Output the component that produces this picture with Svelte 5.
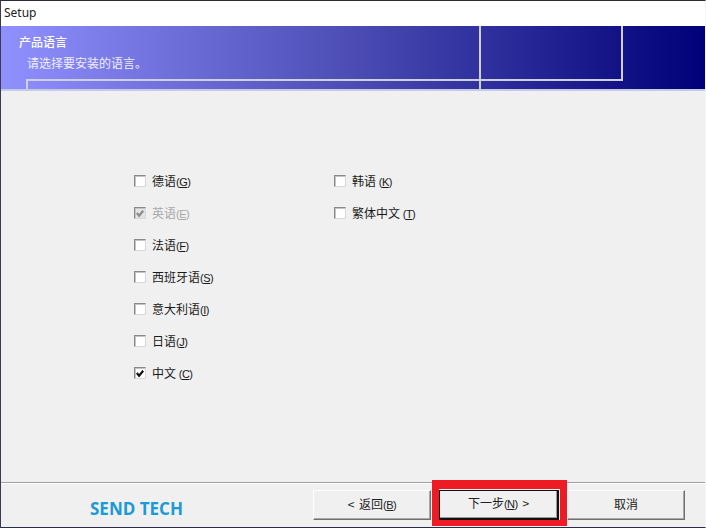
<script>
	const leftCol = [
		{ label: '德语', key: 'G' },
		{ label: '英语', key: 'E', checked: true, disabled: true },
		{ label: '法语', key: 'F' },
		{ label: '西班牙语', key: 'S' },
		{ label: '意大利语', key: 'I' },
		{ label: '日语', key: 'J' },
		{ label: '中文 ', key: 'C', checked: true }
	];
	const rightCol = [
		{ label: '韩语 ', key: 'K' },
		{ label: '繁体中文 ', key: 'T' }
	];
</script>

{#snippet option(item)}
	<div class="option" class:disabled={item.disabled}>
		<span class="box">
			{#if item.checked}
				<svg width="11" height="11" viewBox="0 0 11 11">
					<path d="M2 5 L4.5 8 L9 2.5" fill="none" stroke="currentColor" stroke-width="2.4" />
				</svg>
			{/if}
		</span>
		<span class="label">{item.label}<small>(<u>{item.key}</u>)</small></span>
	</div>
{/snippet}

<div class="window">
	<div class="titlebar">Setup</div>
	<div class="banner">
		<div class="heading">产品语言</div>
		<div class="sub">请选择要安装的语言。</div>
		<i class="deco frame"></i>
		<i class="deco center-line"></i>
		<i class="deco right-line"></i>
	</div>
	<div class="content">
		<div class="col left">
			{#each leftCol as item}
				{@render option(item)}
			{/each}
		</div>
		<div class="col">
			{#each rightCol as item}
				{@render option(item)}
			{/each}
		</div>
	</div>
	<div class="footer">
		<div class="brand">SEND TECH</div>
		<div class="buttons">
			<button class="back">&lt; 返回<small>(<u>B</u>)</small></button>
			<div class="next-wrap">
				<button class="default">下一步<small>(<u>N</u>)</small> &gt;</button>
				<i class="highlight"></i>
			</div>
			<button>取消</button>
		</div>
	</div>
</div>

<style>
	:global(body) {
		margin: 0;
		background: #f0f0f0;
	}

	.window {
		width: 706px;
		height: 528px;
		box-sizing: border-box;
		display: flex;
		flex-direction: column;
		border-top: 1px solid #2b2b3a;
		border-left: 1px solid #3a3a4a;
		border-right: 1px solid #f6f6fa;
		border-bottom: 1px solid #2b2b4a;
		background: #f0f0f0;
		font-family: 'Noto Sans CJK SC', 'Liberation Sans', sans-serif;
		font-size: 12px;
		color: #1a1a1a;
		overflow: hidden;
	}

	.titlebar {
		height: 25px;
		flex: none;
		box-sizing: border-box;
		padding: 4px 0 0 3px;
		background: #fff;
		font-family: 'Noto Sans', 'Liberation Sans', sans-serif;
		font-size: 12px;
		line-height: 16px;
		color: #222;
	}

	.banner {
		position: relative;
		height: 65px;
		flex: none;
		box-sizing: border-box;
		padding: 7px 0 0 18px;
		background: linear-gradient(90deg, #9090ff 0%, #4c4cb4 50%, #000078 100%);
		color: #fff;
		border-bottom: 2px solid #c5cbe6;
	}

	.heading {
		line-height: 17px;
		font-weight: 500;
	}

	.sub {
		line-height: 17px;
		margin: 4px 0 0 8px;
		color: #eeeeff;
	}

	.deco {
		position: absolute;
		display: block;
		border: 0 solid #cfcfe6;
	}

	.frame {
		left: 25px;
		right: 82px;
		top: 53px;
		bottom: 0;
		border-width: 2px 0 0 2px;
	}

	.center-line {
		left: 478px;
		top: 0;
		bottom: 0;
		border-left-width: 2px;
	}

	.right-line {
		left: 620px;
		top: 0;
		height: 53px;
		border-left-width: 2px;
	}

	.content {
		flex: 1;
		display: flex;
		padding: 80px 0 0 133px;
	}

	.col {
		display: flex;
		flex-direction: column;
		gap: 12px;
	}

	.col.left {
		width: 200px;
	}

	.option {
		display: flex;
		align-items: center;
		gap: 6px;
		height: 20px;
	}

	.box {
		width: 10px;
		height: 10px;
		flex: none;
		display: flex;
		align-items: center;
		justify-content: center;
		background: #fff;
		border: 1px solid;
		border-color: #8a8a8a #d8d8d8 #d8d8d8 #8a8a8a;
		box-shadow: inset 1px 1px 0 #c4c4c4;
		color: #111;
	}

	.disabled {
		color: #a8a8a8;
	}

	.disabled .box {
		background: #e4e4e4;
		color: #8c8c8c;
	}

	.label {
		line-height: 16px;
		white-space: pre;
	}

	small {
		font-family: 'Liberation Sans', sans-serif;
		font-size: 11px;
		letter-spacing: -0.5px;
	}

	.footer {
		height: 45px;
		flex: none;
		box-sizing: border-box;
		display: flex;
		border-top: 1px solid #a0a0a0;
		box-shadow: inset 0 1px 0 #fff;
		padding: 7px 20px 0 89px;
	}

	.brand {
		width: 223px;
		padding-top: 9px;
		font-family: 'Open Sans', 'Liberation Sans', sans-serif;
		font-size: 17px;
		line-height: 20px;
		font-weight: 700;
		color: #1a9ad6;
	}

	.buttons {
		display: flex;
		align-items: flex-start;
		gap: 8px;
	}

	button {
		width: 118px;
		height: 30px;
		padding: 0 0 4px;
		box-sizing: border-box;
		background: #f0f0f0;
		border: 1px solid;
		border-color: #fff #707070 #707070 #fff;
		box-shadow: inset -1px -1px 0 #a8a8a8;
		font: inherit;
		color: #222;
		word-spacing: 2px;
	}

	.next-wrap {
		position: relative;
		display: flex;
	}

	button.default {
		width: 120px;
		border: 1px solid #111;
		border-width: 1px 2px 2px 1px;
		box-shadow: inset -1px -1px 0 #999;
	}

	.highlight {
		position: absolute;
		left: -7px;
		right: -8px;
		top: -10px;
		bottom: -6px;
		border: solid #ed1c24;
		border-width: 9px 7px 6px;
		pointer-events: none;
	}
</style>
